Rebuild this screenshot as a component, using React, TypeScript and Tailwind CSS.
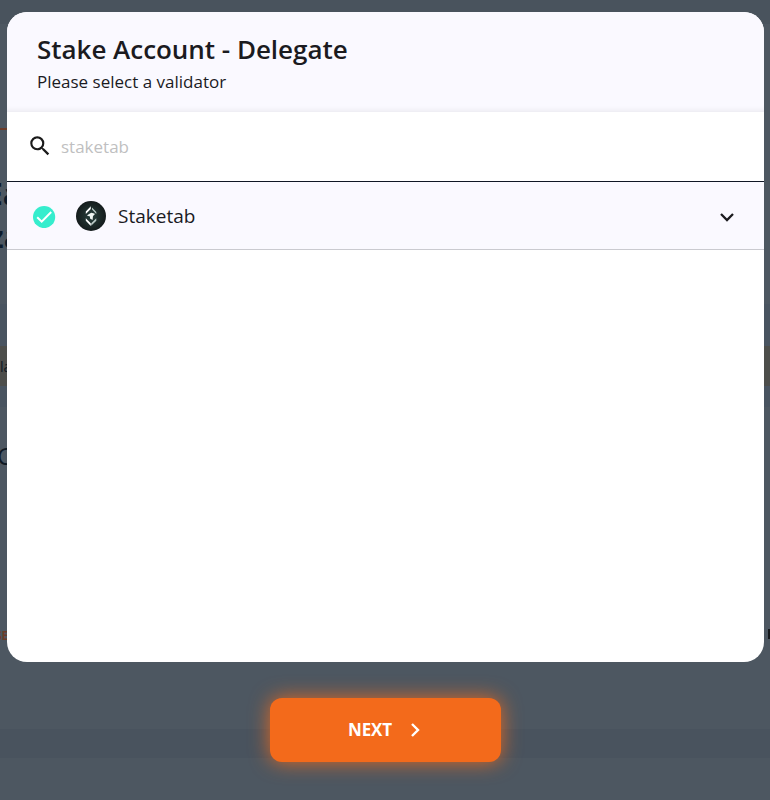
function Backdrop() {
  return (
    <div className="flex h-full flex-col bg-[#4d5761] text-[#0e1823]">
      <div className="h-6 shrink-0 bg-[#49535d]" />
      <div className="h-[104px] shrink-0" />
      <div className="h-[2px] w-[7px] shrink-0 bg-[#6b3c29]" />
      <div className="h-[174px] shrink-0 pt-[42px] text-[30px] leading-[43px] font-bold text-[#0c1a2b]">
        <div className="-ml-[14px]">Ea</div>
        <div className="-ml-[11px]">za</div>
      </div>
      <div className="h-[42px] shrink-0 bg-[#495460]" />
      <div className="flex h-10 shrink-0 items-center bg-[#4d4e4b] pt-[2px] text-sm">la</div>
      <div className="h-[21px] shrink-0 bg-[#495460]" />
      <div className="h-[218px] shrink-0 pt-[33px]">
        <div className="-ml-[3px] text-[24px] leading-8">C</div>
      </div>
      <div className="flex h-[45px] shrink-0 justify-between text-[12px] leading-[22px] font-bold">
        <span className="-ml-[5px] text-[#6b3c29]">SE</span>
        <span className="mt-1 h-[10px] w-[2px] bg-[#15181c]" />
      </div>
      <div className="h-[59px] shrink-0" />
      <div className="h-[29px] shrink-0 bg-[#49535e]" />
      <div className="grow" />
    </div>
  );
}

function ValidatorLogo() {
  return (
    <svg width="30" height="30" viewBox="0 0 30 30" className="ml-5 shrink-0">
      <defs>
        <radialGradient id="logoShade">
          <stop offset="0" stopColor="#29413e" />
          <stop offset="0.65" stopColor="#1c2928" />
          <stop offset="1" stopColor="#141b1c" />
        </radialGradient>
      </defs>
      <circle cx="15" cy="15" r="15" fill="url(#logoShade)" />
      <path d="M9.8 10.5 14.8 5.2V8l-5 5zM9.8 17.3l5 5v2.7l-5-5.2z" fill="#fff" />
      <path d="M16 6.5 20.3 11v2L16 8.5zM15.2 22.3l5.1-5v2.4l-5.1 5z" fill="#b9c8c5" />
      <path d="m10.9 14.4 1.8-1.2 2.5-1.4 3.2.8.3 1-1.7 1.3-.4 4-2.6-1.3v-2.2z" fill="#f0f5f3" />
    </svg>
  );
}

export default function App() {
  return (
    <div className="relative h-[800px] w-[770px] overflow-hidden font-['Open_Sans','Noto_Sans',sans-serif] text-[#1b1b1f]">
      <Backdrop />
      <div className="absolute inset-0 flex flex-col items-center pt-3 pr-[6px] pl-[7px]">
        <section className="flex h-[650px] w-full shrink-0 flex-col overflow-hidden rounded-[20px] bg-white">
          <header className="h-[100px] shrink-0 bg-[#faf9ff] px-[30px] pt-[19px] shadow-[inset_0_-7px_6px_-6px_rgba(0,0,0,0.08)]">
            <h1 className="text-[26px] leading-9 font-semibold tracking-[-0.03px]">Stake Account - Delegate</h1>
            <p className="mt-px text-[17px] leading-7">Please select a validator</p>
          </header>
          <div className="flex h-[70px] shrink-0 items-center border-b border-[#101725] pl-5">
            <svg width="26" height="26" viewBox="0 0 24 24" fill="#1b1b1b" className="mb-[2px]">
              <path d="M15.5 14h-.79l-.28-.27A6.47 6.47 0 0 0 16 9.5 6.5 6.5 0 1 0 9.5 16c1.61 0 3.09-.59 4.23-1.57l.27.28v.79l5 4.99L20.49 19zm-6 0C7.01 14 5 11.99 5 9.5S7.01 5 9.5 5 14 7.01 14 9.5 11.99 14 9.5 14" />
            </svg>
            <input
              aria-label="Search validators"
              placeholder="staketab"
              className="ml-2 w-80 bg-transparent text-[17px] leading-7 outline-none placeholder:text-[#bfbfc1]"
            />
          </div>
          <div className="flex h-[68px] shrink-0 items-center border-b border-[#cacad0] bg-[#faf9ff] pr-[25px] pl-[26px]">
            <svg width="23" height="23" viewBox="0 0 23 23" className="mt-[2px] shrink-0">
              <circle cx="11.1" cy="12" r="11.1" fill="#35edcd" />
              <path d="m4.2 12.3 4.5 4.4 9.5-9.7" fill="none" stroke="#fff" strokeWidth="2" />
            </svg>
            <ValidatorLogo />
            <span className="ml-3 text-[19px] leading-7">Staketab</span>
            <svg width="24" height="24" viewBox="0 0 24 24" className="mt-[2px] ml-auto">
              <path d="m6 9 6 6 6-6" fill="none" stroke="#1b1b1f" strokeWidth="2.3" />
            </svg>
          </div>
        </section>
        <button className="mt-9 flex h-16 w-[231px] shrink-0 items-center justify-center rounded-xl bg-[#f36a1b] pl-1 text-[17px] font-bold text-white shadow-[0_0_20px_rgba(243,106,27,0.9)]">
          <span className="tracking-[-0.1px]">NEXT</span>
          <svg width="24" height="24" viewBox="0 0 24 24" className="ml-[11px]">
            <path d="m9 6 6 6-6 6" fill="none" stroke="#fff" strokeWidth="2.4" />
          </svg>
        </button>
      </div>
    </div>
  );
}
